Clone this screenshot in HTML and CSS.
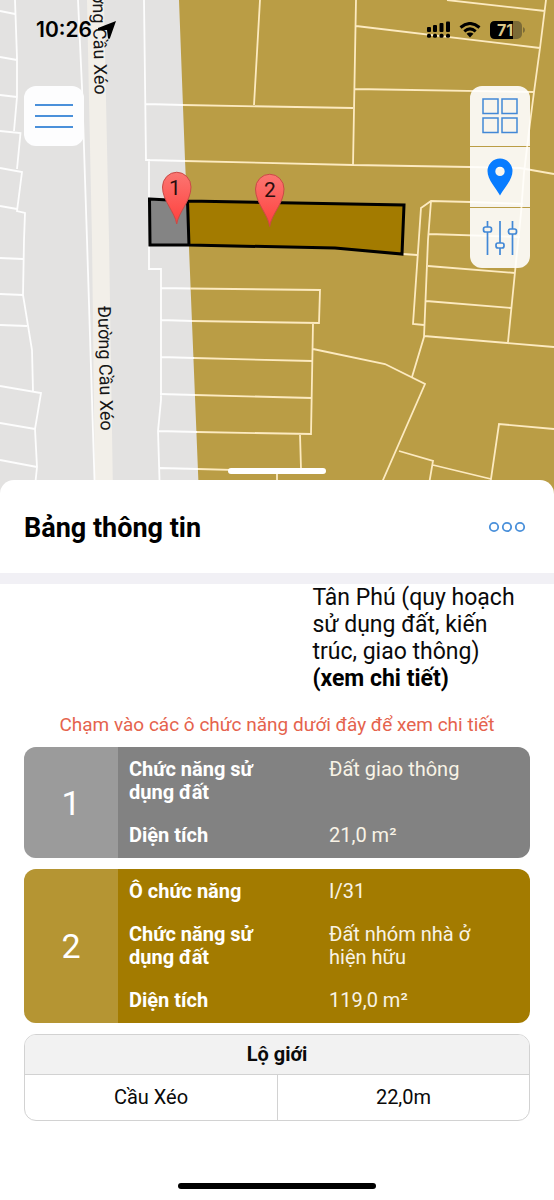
FILE: index.html
```
<!DOCTYPE html>
<html lang="vi">
<head>
<meta charset="utf-8">
<meta name="viewport" content="width=device-width, initial-scale=1">
<title>Bảng thông tin</title>
<link rel="stylesheet" href="styles.css">
</head>
<body>
<main class="app">
  <section class="map" aria-label="Bản đồ">
    <svg class="map-canvas" viewBox="0 0 554 496" preserveAspectRatio="xMidYMin slice">
      <defs>
        <linearGradient id="pin-fill" x1="0" y1="0" x2="0" y2="1">
          <stop offset="0" stop-color="#fb7672"/>
          <stop offset="1" stop-color="#ff403d"/>
        </linearGradient>
      </defs>
      <rect width="554" height="496" fill="#e3e2e1"/>
      <path d="M87 0H104L106 100L109 240L113 496H95L92 240L89 100Z" fill="#f2efe9"/>
      <path d="M179 0L185 160L189 248L199 496H554V0Z" fill="#ba9d45"/>
      <g fill="none" stroke="#fdfdfd" stroke-width="1.8">
        <path d="M15 0L17 58V97L14 131M0 11L15 14M0 57L17 60M0 95L17 97M0 131L20.500 133L17 169M0 168L22 172L17 211L25 213L24 240L23 295L32 350L33 391M0 206L17 209M0 258L23 259M0 294L23 295M0 325L27 326M0 386L41 393L35 429L37 467L34 496M0 423L35 429M0 460L37 467"/>
        <path d="M78 0L82 87L87 240L95 496M144 0L146 160H149V198M149 246V269H161V400L158 431L160 496M146 104L183 105M146 160L185 161M161 288L190 288.500M161 320L192 321M161 357L194 358M160 394L195 395M158 431L197 432M160 468L198 469"/>
      </g>
      <g fill="none" stroke="#fceac0" stroke-width="1.8">
        <path d="M183 105L353 108M185 161L353 165L470 167L520 168L554 174M260 0L254 105M356 0L353 165M447 0L545 11M356 26L540 48M354 89L534 92M546 0L540 48L534 92L530 123L524 173L521 213L515 272L508 342"/>
        <path d="M403 254L417 255M523 204L471 202L431 201L421 208L413 324L424 325M431 201L428 240L424 337L412 377M429 234L520 237M428 266L515 273M426 301L511 308M424 336L554 347"/>
        <path d="M190 288.500L320 290L319 323L192 321M313 323L311 434L197 432M194 358L312 361M195 395L312 398M300 434L301 469M198 469L274 471M277 471V496M313 349L385 364L425 384L376 496M399 451L433 461L427 496M433 465L491 479L499 424L554 429M491 479L489 496"/>
      </g>
      <path d="M149.500 199L188 201L189 245L150 245Z" fill="#848484"/>
      <path d="M188 201L404 205L402 254L335 248L189 245Z" fill="#a37b00"/>
      <path d="M149.500 199L188 201L404 205L402 254L335 248L189 245H150ZM187.500 200L189 246" fill="none" stroke="#000" stroke-width="3"/>
      <g class="road-label">
        <text transform="translate(92 -30) rotate(88.800)">Đường Cầu Xéo</text>
        <text transform="translate(98 306) rotate(88.800)">Đường Cầu Xéo</text>
      </g>
      <g class="pin-label">
        <path d="M176.700 224C175 212 162.500 201 162.500 187A14.200 14.700 0 0 1 191 187C191 201 178.500 212 176.700 224Z"/>
        <text x="175" y="195">1</text>
        <path d="M269.700 226.500C268 214 255.500 203 255.500 189A14.200 14.700 0 0 1 284 189C284 203 271.500 214 269.700 226.500Z"/>
        <text x="270" y="197">2</text>
      </g>
    </svg>

    <div class="status-bar">
      <div class="status-group status-time">
        <span>10:26</span>
        <svg width="18" height="18" viewBox="0 0 18 18"><path d="M18 0L0 7Q-1 9 1 9L9 9L10 17Q11 19 12 17Z" fill="#000"/></svg>
      </div>
      <div class="status-group status-icons">
        <svg width="23" height="18" viewBox="0 0 23 18" fill="#000">
          <rect x="0" y="6" width="4" height="5" rx="1"/><rect x="6" y="4" width="4" height="7" rx="1"/><rect x="12.500" y="2" width="4" height="9" rx="1"/><rect x="19" y="0.500" width="4" height="10.500" rx="1"/>
          <rect x="0" y="12.800" width="4" height="4" rx="1.500"/><rect x="6" y="12.800" width="4" height="4" rx="1.500"/><rect x="12.500" y="12.800" width="4" height="4" rx="1.500"/><rect x="19" y="12.800" width="4" height="4" rx="1.500"/>
        </svg>
        <svg width="22" height="16" viewBox="0 0 22 16" fill="none" stroke="#000" stroke-width="3">
          <path d="M1.500 5.500Q11 -2.500 20.500 5.500M5.300 9.300Q11 4.500 16.700 9.300"/><path d="M7.500 11.800Q11 9.200 14.500 11.800L11 15.600Z" fill="#000" stroke="none"/>
        </svg>
        <svg class="battery" width="35" height="18" viewBox="0 0 35 18">
          <rect width="32" height="18" rx="5" fill="#7c6b37"/>
          <path d="M5 0H23V18H5Q0 18 0 13V5Q0 0 5 0Z" fill="#000"/>
          <path d="M33 6Q35 7 35 9Q35 11 33 12Z" fill="#7c6b37"/>
          <text x="15" y="15">71</text>
        </svg>
      </div>
    </div>

    <div class="map-controls">
      <button class="menu-button" type="button" aria-label="Menu">
        <svg width="38" height="26" viewBox="0 0 38 26" stroke="#4a90da" stroke-width="2"><path d="M0 2H38M0 13H38M0 24H38"/></svg>
      </button>
      <div class="tool-stack">
        <button class="tool-button" type="button" aria-label="Lớp bản đồ">
          <svg width="36" height="36" viewBox="0 0 36 36" fill="none" stroke="#4288d6" stroke-width="1.500"><path d="M1 1H16V15.500H1ZM20 1H35V15.500H20ZM1 20H16V34.500H1ZM20 20H35V34.500H20Z"/></svg>
        </button>
        <button class="tool-button" type="button" aria-label="Vị trí">
          <svg width="26" height="38" viewBox="0 0 26 38"><path fill="#087cff" fill-rule="evenodd" d="M13 0.500A12.500 12.500 0 0 0 0.500 13C0.500 22 9 30 13 37.500C17 30 25.500 22 25.500 13A12.500 12.500 0 0 0 13 0.500ZM13 8.700A4.700 4.700 0 1 1 13 18.100A4.700 4.700 0 1 1 13 8.700Z"/></svg>
        </button>
        <button class="tool-button" type="button" aria-label="Bộ lọc">
          <svg width="36" height="36" viewBox="0 0 36 36" fill="none" stroke="#4288d6" stroke-width="1.700"><path d="M5.500 1V7M5.500 12V35M18 1V23M18 28V35M30.500 1V9M30.500 14V35"/><rect x="1.500" y="7" width="8" height="5" rx="2"/><rect x="14" y="23" width="8" height="5" rx="2"/><rect x="26.500" y="9" width="8" height="5" rx="2"/></svg>
        </button>
      </div>
    </div>
    <div class="grabber"></div>
  </section>

  <section class="sheet">
    <header class="sheet-header">
      <h1>Bảng thông tin</h1>
      <button class="more-button" type="button" aria-label="Thêm">
        <svg width="38" height="14" viewBox="0 0 38 14" fill="none" stroke="#4a90da" stroke-width="1.800"><circle cx="6" cy="6" r="4.200"/><circle cx="19" cy="6" r="4.200"/><circle cx="32" cy="6" r="4.200"/></svg>
      </button>
    </header>
    <div class="sheet-body">
      <div class="plan-row">
        <p class="plan-text">Tân Phú (quy hoạch sử dụng đất, kiến trúc, giao thông) <a href="#chi-tiet">(xem chi tiết)</a></p>
      </div>
      <p class="hint">Chạm vào các ô chức năng dưới đây để xem chi tiết</p>
      <div class="cards">
        <button class="zone zone-road" type="button">
          <span class="zone-number">1</span>
          <span class="zone-facts">
            <span class="fact-label">Chức năng sử dụng đất</span><span class="fact-value">Đất giao thông</span>
            <span class="fact-label">Diện tích</span><span class="fact-value">21,0 m²</span>
          </span>
        </button>
        <button class="zone zone-housing" type="button">
          <span class="zone-number">2</span>
          <span class="zone-facts">
            <span class="fact-label">Ô chức năng</span><span class="fact-value">I/31</span>
            <span class="fact-label">Chức năng sử dụng đất</span><span class="fact-value">Đất nhóm nhà ở hiện hữu</span>
            <span class="fact-label">Diện tích</span><span class="fact-value">119,0 m²</span>
          </span>
        </button>
        <table class="limits">
          <thead><tr><th colspan="2">Lộ giới</th></tr></thead>
          <tbody><tr><td>Cầu Xéo</td><td>22,0m</td></tr></tbody>
        </table>
      </div>
    </div>
    <div class="home-indicator"></div>
  </section>
</main>
</body>
</html>
```
FILE: styles.css
```
* { box-sizing: border-box; }

body {
  margin: 0;
  font-family: Roboto, "Noto Sans", sans-serif;
  color: #0a0a0a;
  background: #fff;
}

button {
  border: 0;
  padding: 0;
  font: inherit;
  cursor: pointer;
}

svg { display: block; }

.app {
  min-height: 100vh;
  display: flex;
  flex-direction: column;
}

/* Map */
.map {
  position: relative;
  isolation: isolate;
  height: calc(40vh + 16px);
  min-height: 360px;
  display: flex;
  flex-direction: column;
  overflow: hidden;
}

.map-canvas {
  position: absolute;
  inset: 0;
  z-index: -1;
  width: 100%;
  height: 100%;
}

.road-label {
  font-size: 18px;
  fill: #161616;
}

.pin-label path {
  fill: url(#pin-fill);
  stroke: #c94a46;
  stroke-width: 1;
}

.pin-label text {
  font-size: 21px;
  text-anchor: middle;
  fill: #2b0d0d;
}

.status-bar {
  display: flex;
  justify-content: space-between;
  padding: 18px 29px 0 36px;
}

.status-group {
  display: flex;
  align-items: center;
  height: 24px;
}

.status-time {
  gap: 6px;
  font: 600 21px/24px Inter, sans-serif;
  color: #000;
}

.status-icons { gap: 9px; }

.battery text {
  font: 700 16px Inter, sans-serif;
  text-anchor: middle;
  fill: #dcc888;
}

.map-controls {
  display: flex;
  justify-content: space-between;
  align-items: flex-start;
  padding: 44px 24px 0;
}

.menu-button,
.tool-button {
  width: 60px;
  height: 60px;
  display: grid;
  place-items: center;
}

.menu-button {
  border-radius: 12px;
  background: #fdfdfe;
}

.tool-stack {
  display: grid;
  gap: 1px;
  border-radius: 12px;
  overflow: hidden;
}

.tool-button { background: rgba(255, 255, 255, 0.9); }

.grabber {
  width: 98px;
  height: 6px;
  margin: auto auto 22px;
  border-radius: 3px;
  background: #fff;
}

/* Information sheet */
.sheet {
  position: relative;
  flex: 1;
  display: flex;
  flex-direction: column;
  margin-top: -16px;
  border-radius: 14px 14px 0 0;
  background: #fff;
}

.sheet-header {
  display: flex;
  justify-content: space-between;
  align-items: center;
  padding: 32px 28px 29px 24px;
  border-bottom: 11px solid #f1f0f5;
}

h1 {
  margin: 0;
  font-size: 27px;
  line-height: 32px;
  font-weight: 700;
  color: #000;
}

.more-button { background: none; }

.sheet-body {
  flex: 1;
  padding: 0 24px;
}

.plan-row {
  display: grid;
  grid-template-columns: 57% 43%;
}

.plan-text {
  grid-column: 2;
  margin: 0;
  font-size: 23px;
  line-height: 27px;
}

.plan-text a {
  display: block;
  color: #000;
  font-weight: 700;
  text-decoration: none;
}

.hint {
  margin: 21px 0 11px;
  font-size: 19px;
  line-height: 23px;
  text-align: center;
  color: #e5634d;
}

.cards {
  display: grid;
  gap: 11px;
}

.zone {
  display: grid;
  grid-template-columns: 94px 1fr;
  border-radius: 12px;
  overflow: hidden;
  text-align: left;
  color: #fff;
}

.zone-road { background: #828282; }
.zone-housing { background: #a37b00; }

.zone-number {
  display: grid;
  place-items: center;
  font-size: 34px;
  background: rgba(255, 255, 255, 0.2);
}

.zone-facts {
  display: grid;
  grid-template-columns: 160px 1fr;
  gap: 20px 40px;
  padding: 11px 20px 11px 11px;
  font-size: 20px;
  line-height: 23px;
}

.fact-label { font-weight: 700; }
.fact-value { color: #f8f3e6; }

.limits {
  width: 100%;
  border: 1px solid #d2d2d2;
  border-radius: 12px;
  border-spacing: 0;
  overflow: hidden;
  font-size: 20px;
  line-height: 23px;
  text-align: center;
}

.limits th {
  padding: 8px;
  border-bottom: 1px solid #d2d2d2;
  background: #f2f2f2;
}

.limits td {
  width: 50%;
  padding: 11px 10px;
}

.limits td + td { border-left: 1px solid #d2d2d2; }

.home-indicator {
  width: 198px;
  height: 6px;
  margin: 20px auto 11px;
  border-radius: 3px;
  background: #000;
}
```
